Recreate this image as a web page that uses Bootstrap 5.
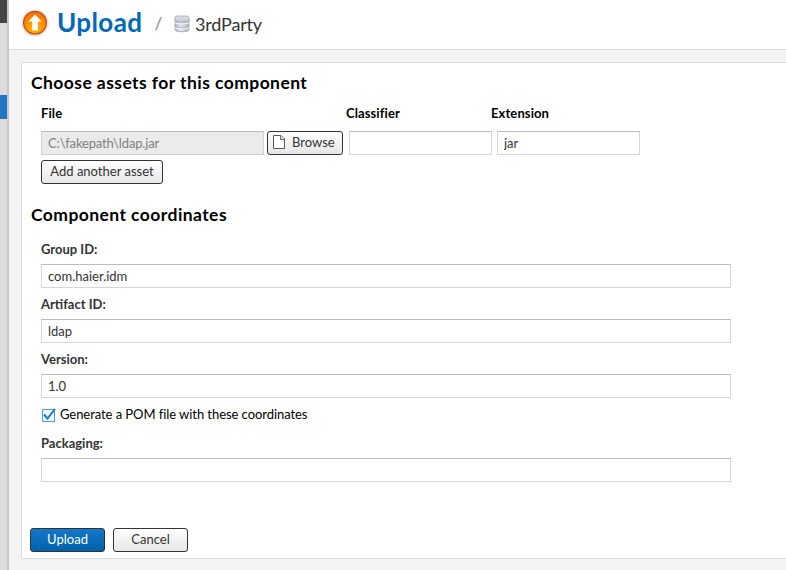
<!DOCTYPE html>
<html lang="en">
<head>
<meta charset="utf-8">
<meta name="viewport" content="width=device-width, initial-scale=1">
<title>Upload / 3rdParty</title>
<link href="https://cdn.jsdelivr.net/npm/bootstrap@5.3.0/dist/css/bootstrap.min.css" rel="stylesheet">
<style>
body{font-family:Lato,"Liberation Sans",sans-serif;font-size:13px;line-height:20px;color:#333;background:#f3f3f3}
.rail{width:9px;background:#ddd;border-right:2px solid #c6c6c6}
.rail-top{height:23px;background:#444}
.rail-active{height:24px;margin-top:72px;background:#2476c3}
.topbar{height:50px;border-bottom:1px solid #ddd;padding:0 0 3px 13px}
.topbar h1{font-size:26px;line-height:30px;color:#0068b9;letter-spacing:.4px;margin:0 0 2px 7px}
.slash{font-size:17px;color:#888;margin:2px 0 0 12px}
.db-icon{margin:2px 0 0 12px}
.repo{font-size:18px;line-height:24px;letter-spacing:-.2px;margin:1px 0 0 5px}
.panel{margin:12px 0 0 12px;height:497px;border:1px solid #ddd;border-right:0;padding:10px 0 0 8px}
.panel h2{font-size:17.5px;line-height:20px;color:#000;margin:0 0 0 1px;font-weight:700;letter-spacing:.43px}
.panel h2.second{margin-top:21px}
.inset{padding-left:11px}
.coords{margin-top:15px}
.panel .form-control{height:24px;min-height:0;border-radius:0;border:1px solid #d6d6d6;border-top-color:#bdbdbd;padding:0 6px 1px;font-size:13px;line-height:20px;color:#333}
.panel .form-control:disabled{background:#ebebeb;color:#808080;border-color:#d2d2d2;border-top-color:#bdbdbd;letter-spacing:-.15px}
.panel .form-label{display:block;margin:0 0 6px;font-weight:700;line-height:18px}
.panel .btn{height:24px;border:1px solid #333;border-radius:3px;padding:0 0 2px;font-size:13px;line-height:20px;color:#333;background:linear-gradient(#fff,#e6e6e6)}
.panel .btn-primary{color:#fff;background:linear-gradient(#1478c8,#0062ae)}
.panel .w-browse{width:76px;margin:0 6px 0 3px;padding-left:5px;gap:7px}
.panel .w-add{width:122px;margin-top:5px}
.asset-head{margin-top:11px;height:20px;line-height:18px;color:#000;font-weight:700;letter-spacing:.1px}
.col-file{width:305px}.col-classifier{width:145px}
.w-file{width:223px}.w-short{width:143px}.w-act{width:75px}.w-full{width:690px}
.w-short + .w-short{margin-left:5px}
.field{margin-bottom:7px}
.assets{margin-top:7px}
.pom{margin-bottom:9px;gap:4px;letter-spacing:-.06px}
.pom span{padding-bottom:1px;line-height:19px}
.actions{margin-top:46px}
</style>
<script src="https://cdn.jsdelivr.net/npm/bootstrap@5.3.0/dist/js/bootstrap.bundle.min.js"></script>
</head>
<body class="vh-100 overflow-hidden d-flex">
<aside class="rail flex-shrink-0"><div class="rail-top"></div><div class="rail-active"></div></aside>
<main class="flex-grow-1">
<header class="topbar bg-white d-flex align-items-center">
  <svg width="28" height="28" viewBox="0 0 28 28" aria-hidden="true">
    <defs><radialGradient id="o" cx=".5" cy=".75" r=".75"><stop offset="0" stop-color="#ffb800"/><stop offset=".6" stop-color="#ff8c00"/><stop offset="1" stop-color="#ed6b00"/></radialGradient></defs>
    <circle cx="13" cy="14" r="13.600" fill="#d3d7dc"/><circle cx="13" cy="13.700" r="12.900" fill="#eceef1"/>
    <circle cx="13" cy="13.700" r="11.400" fill="url(#o)" stroke="#c74a0a" stroke-width="1.300"/>
    <path d="M13 5.500l6.500 7h-3.700V21.500h-5.600v-9H6.500z" fill="#fff"/>
  </svg>
  <h1 class="fw-bold">Upload</h1>
  <span class="slash">/</span>
  <svg class="db-icon" width="16" height="18" viewBox="0 0 16 18" aria-hidden="true">
    <defs><linearGradient id="d"><stop offset="0" stop-color="#b3bac4"/><stop offset=".4" stop-color="#e2e6ec"/><stop offset="1" stop-color="#a9b1bc"/></linearGradient></defs>
    <path d="M1 3.500v11c0 1.600 3 2.200 7 2.200s7-.6 7-2.200v-11z" fill="url(#d)" stroke="#9aa1ac" stroke-width=".8"/>
    <rect x="1" y="1" width="14" height="5" rx="2.300" fill="#d3d8df" stroke="#a4abb5" stroke-width=".8"/>
    <path d="M1 7.300c2 1.800 12 1.800 14 0M1 12.300c2 1.800 12 1.800 14 0" fill="none" stroke="#f8f9fb" stroke-width="1.200"/>
    <path d="M1 6.500c2 1.800 12 1.800 14 0M1 11.500c2 1.800 12 1.800 14 0" fill="none" stroke="#979fab" stroke-width=".7"/>
  </svg>
  <span class="repo">3rdParty</span>
</header>
<section class="panel bg-white">
  <h2>Choose assets for this component</h2>
  <div class="inset">
    <div class="asset-head d-flex"><span class="col-file">File</span><span class="col-classifier">Classifier</span><span>Extension</span></div>
    <div class="assets d-flex">
      <input class="form-control w-file" value="C:\fakepath\ldap.jar" disabled aria-label="File">
      <button class="btn w-browse d-flex align-items-center">
        <svg width="12" height="14" viewBox="0 0 12 14" aria-hidden="true"><path d="M.5.5h7.500l3.500 3.500v9.500H.5z" fill="#fff" stroke="#555"/><path d="M7.500.5v4h4" fill="#ccecf6" stroke="#666"/></svg>
        <span>Browse</span></button>
      <input class="form-control w-short" aria-label="Classifier">
      <input class="form-control w-short" value="jar" aria-label="Extension">
    </div>
    <button class="btn w-add d-block">Add another asset</button>
  </div>
  <h2 class="second">Component coordinates</h2>
  <form class="inset coords">
    <div class="field"><label class="form-label" for="g">Group ID:</label><input id="g" class="form-control w-full" value="com.haier.idm"></div>
    <div class="field"><label class="form-label" for="a">Artifact ID:</label><input id="a" class="form-control w-full" value="ldap"></div>
    <div class="field"><label class="form-label" for="v">Version:</label><input id="v" class="form-control w-full" value="1.0"></div>
    <div class="pom d-flex align-items-center text-black">
      <svg width="15" height="15" viewBox="0 0 15 15" aria-hidden="true"><rect x="1.500" y="1.500" width="12" height="12" fill="#f1f6fa" stroke="#4c9fdc"/><path d="M3 6.500l3.500 4 7.500-9.500" fill="none" stroke="#1478c8" stroke-width="2"/></svg>
      <span>Generate a POM file with these coordinates</span>
    </div>
    <div><label class="form-label" for="p">Packaging:</label><input id="p" class="form-control w-full"></div>
  </form>
  <div class="actions d-flex gap-2"><button class="btn btn-primary w-act">Upload</button><button class="btn w-act">Cancel</button></div>
</section>
</main>
</body>
</html>
